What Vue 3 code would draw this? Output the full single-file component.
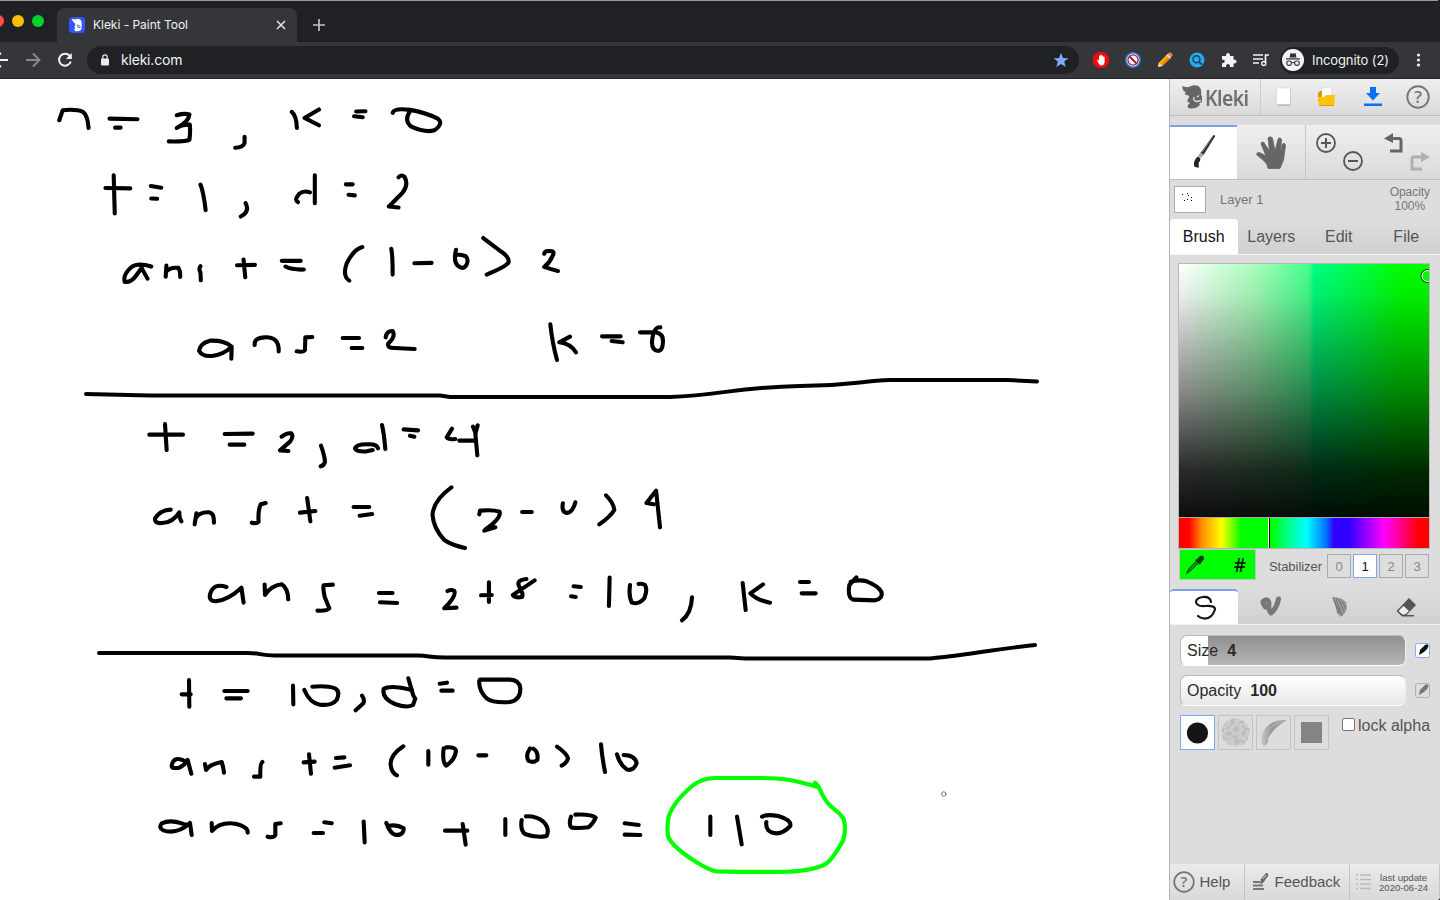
<script setup>
// Pen strokes of the canvas, grouped by area; each area has its own origin and scale.
const inkAreas = [
  {
    x: 40, y: 80, sx: 0.34439, sy: 0.3355,
    d: `M56 120L66 90Q105 86 125 95Q138 105 141 143M202 115L283 117M218 142H234
    M397 105Q420 98 434 103Q432 125 397 143Q410 132 435 133Q437 155 434 178Q425 184 374 183
    M594 169V188Q590 200 567 202M731 95Q744 105 746 143M810 88L768 113L810 135M918 94L945 93M912 108L937 111
    M1024 98Q1028 83 1075 89Q1120 97 1155 115Q1173 130 1145 150Q1120 158 1080 140Q1055 122 1075 92
    M214 284L217 398M190 322L262 323M322 316L352 321M323 353L340 354M466 312Q474 330 481 388M597 367Q610 392 583 407
    M749 364Q737 358 752 340Q765 328 784 335M798 284L798 367M888 311H908M896 342L914 344
    M1041 290Q1050 280 1058 288Q1072 312 1052 337L1013 377L1041 380
    M323 556Q285 543 265 558Q240 580 246 602Q265 604 280 582L295 560L312 592M367 553L365 586M367 570Q380 557 402 560Q408 570 407 587
    M466 555Q460 562 466 575L467 597M591 535L596 588M572 552L624 551M702 539H757M713 556Q730 566 766 565
    M936 498Q910 505 890 548Q878 585 898 598M1020 503Q1024 520 1024 580M1087 546L1137 545
    M1208 506Q1200 540 1212 552Q1228 568 1238 552Q1246 535 1236 525Q1225 520 1210 520
    M1287 471L1340 512Q1365 530 1360 545Q1350 558 1297 580M1464 518Q1466 508 1480 510Q1497 508 1488 525Q1480 545 1464 557Q1480 563 1504 569`
  },
  {
    x: 180, y: 290, sx: 0.33333, sy: 0.33333,
    d: `M153 168Q130 150 90 152Q60 160 57 182Q65 200 95 198Q130 195 155 170L154 206M224 165Q222 143 255 142Q298 140 296 184
    M397 141L376 142L375 180Q370 188 350 184M488 144H537M515 174H547M617 142Q620 122 638 123Q648 140 625 160Q620 175 645 174L704 177
    M1111 103Q1117 160 1131 210M1170 140L1138 157Q1170 160 1188 187M1266 139H1322M1295 153L1328 157
    M1380 127H1425Q1450 130 1449 155Q1448 182 1435 183Q1415 182 1416 155Q1420 110 1441 112
    M-45 402L-40 480M-92 434L9 434M134 432L218 431M149 464H193M305 440Q320 428 334 430Q342 440 330 455L300 481L325 483M423 467Q433 495 435 515Q432 527 422 529
    M594 475Q590 462 565 463Q530 462 525 475Q530 486 560 484L578 480M606 405Q612 430 616 477M671 418L714 421M690 437L703 440
    M816 416L800 442Q806 450 826 447M838 452H887M893 406L886 430L892 496M879 410L887 430`
  },
  {
    x: 130, y: 470, sx: 0.35714, sy: 0.3333,
    d: `M114 119Q85 120 70 145Q68 162 90 159Q120 158 138 127Q138 145 144 154M186 130L181 163M184 145Q195 125 222 127Q236 130 235 158
    M380 99L366 103Q358 120 360 155Q355 162 341 158M496 84L505 154M476 128L519 123M626 111H670M643 137L678 132
    M900 52Q850 90 847 135Q850 175 880 210Q900 225 938 234M978 133L980 122Q1015 118 1035 125Q1040 145 995 178L1023 172L992 182
    M1098 126H1125M1212 100Q1208 125 1222 129Q1238 130 1247 97M1333 76Q1355 100 1356 120Q1345 140 1314 163M1466 103L1446 99L1473 62L1484 172
    M270 351Q235 338 225 370Q218 393 240 394Q275 390 312 353L318 398M377 344L378 375Q395 347 425 343Q442 355 443 388
    M568 344L542 346Q540 355 545 380L558 415Q555 423 525 422M697 369H735M700 397L748 399M889 363Q900 357 908 363Q915 378 880 415L914 413
    M1005 337V396M983 376L1013 375M1133 331Q1100 355 1072 375Q1075 385 1098 381Q1102 370 1090 350Q1080 330 1110 327
    M1242 349L1262 351M1235 379L1248 381M1343 323L1341 408M1400 345Q1396 380 1405 398Q1425 405 1440 385Q1450 360 1442 345Q1435 340 1424 342`
  },
  {
    x: 560, y: 560, sx: 0.33333, sy: 0.33333,
    d: `M396 112Q394 160 366 181M548 69L557 150M609 73L571 100Q590 120 630 128M720 66H747M725 100H767
    M889 52L868 75Q862 115 880 119L945 121Q970 115 964 95Q955 78 920 64Q900 58 872 65M194 790L236 795M194 824L241 825
    M451 770V825M531 770L545 853M606 770Q620 762 655 768Q695 780 691 798Q670 820 650 820Q615 818 619 786`
  },
  {
    x: 150, y: 640, sx: 0.33333, sy: 0.33333,
    d: `M117 120L118 200M95 163H122M223 153H293M229 175H273M429 137L430 193M463 150Q480 190 510 194Q545 198 560 180Q572 155 555 145Q530 136 487 140
    M636 167Q645 180 640 190L617 211M775 115L788 160Q790 170 796 176L789 195Q770 205 735 192Q695 175 701 147Q720 134 786 150
    M869 131L891 128M874 152H908M988 122Q985 150 1010 175Q1030 190 1080 186Q1112 180 1111 145Q1108 120 1080 119H990
    M110 366Q70 343 65 378Q65 387 88 383Q105 375 113 360L124 401M165 372L168 390Q180 372 215 366Q220 380 222 398M337 366Q330 370 331 410H312
    M477 343L483 401M461 367L494 365M558 354L583 352M554 383L600 376M760 319Q720 345 722 375Q725 400 741 406M835 333V374
    M889 322Q915 320 918 332Q915 360 888 377Q876 365 881 325M985 346H1009M1140 325Q1126 345 1135 362Q1150 370 1162 360Q1166 335 1150 326
    M1221 320Q1250 340 1254 355Q1250 370 1235 377M1353 313Q1356 350 1365 396M1401 343Q1410 375 1430 388Q1450 395 1460 370Q1455 345 1421 345
    M120 549Q80 585 40 571Q25 565 35 550Q60 538 95 550Q115 558 120 549L125 585M185 549L186 573Q210 545 255 551Q295 560 293 578
    M392 550L376 552V585Q370 595 353 590M523 547L545 550M491 579H519M641 545L644 607M709 549Q720 580 735 584Q760 588 761 565Q740 552 715 558
    M938 552L947 614M885 572H952M1066 537V585M1115 540Q1110 570 1125 582Q1160 595 1190 588Q1200 565 1180 545Q1160 528 1128 529
    M1263 530Q1255 555 1265 563Q1290 565 1315 562Q1330 550 1337 533Q1325 522 1276 524`
  }
]
const levels = [0, 1, 2, 3]
const tabs = ['Brush', 'Layers', 'Edit', 'File']
</script>

<template>
  <div class="window">
    <div class="tabbar">
      <svg class="lights" width="57" height="41"><circle cx="-2" cy="20" r="6" fill="#ff4f48" /><circle cx="18" cy="20" r="6" fill="#ffbd05" /><circle cx="38" cy="20" r="6" fill="#00d42b" /></svg>
      <div class="tab">
        <svg class="fav" width="16" height="16" viewBox="0 0 16 16"><rect width="16" height="16" rx="4" fill="#3355ff" /><path d="M3 2Q6 2.8 9 1.8Q13 2.5 12.7 7V11.5Q11 12 12 13Q9 15 6 14Q4.5 13 6 11Q4.5 9.5 6.5 8Q6.5 6.5 5 5.5Q3 4.5 3 2" fill="#fff" /><path d="M9 7.5Q8 10.5 10 10.5L11.7 10M10.3 8.3v.8" stroke="#2848d8" fill="none" /></svg>
        <span class="tab-title">Kleki - Paint Tool</span>
        <svg class="close" width="10" height="10" viewBox="0 0 10 10" stroke="#e5e6e8" stroke-width="1.5"><path d="M1 1L9 9M9 1L1 9" /></svg>
      </div>
      <svg class="plus" width="12" height="12" stroke="#bfc1c4" stroke-width="1.7"><path d="M6 0V12M0 6H12" /></svg>
    </div>

    <div class="toolbar">
      <svg width="87" height="36" fill="none" stroke-width="1.8">
        <path d="M-6 18H8M1 11L-6 18L1 25" stroke="#f1f3f4" />
        <path d="M26 18H39M33 11.5L39.5 18L33 24.5" stroke="#8a8b8e" />
        <path d="M70 14.2A6 6 0 1 0 70.8 19.5" stroke="#f1f3f4" stroke-width="2" /><path d="M71.8 11V17H66Z" fill="#f1f3f4" />
      </svg>
      <div class="url">
        <svg width="10" height="12" viewBox="0 0 10 12"><rect x="1" y="4.5" width="8" height="7" rx="1" fill="#e8eaed" /><path d="M2.8 5V3a2.2 2.2 0 0 1 4.4 0V5" fill="none" stroke="#e8eaed" stroke-width="1.2" /></svg>
        <span class="host">kleki.com</span>
        <svg class="star" width="16" height="16" viewBox="0 0 16 16"><path d="M8 .8L10 6L15.5 6.2L11.2 9.6L12.7 15L8 11.9L3.3 15L4.8 9.6L.5 6.2L6 6Z" fill="#7baaf7" /></svg>
      </div>
      <div class="exts">
        <svg width="16" height="16" viewBox="0 0 16 16"><path d="M4.7 0H11.3L16 4.7V11.3L11.3 16H4.7L0 11.3V4.7Z" fill="#f20a0a" /><path d="M4 8Q5 7 6 9V4Q6.5 3 7.2 4V3Q8 2 8.7 3V4Q9.5 3 10.2 4V5Q11 4 11.7 5.2V10Q11 13.5 8.5 13.5Q6 13.5 4 8" fill="#fff" /></svg>
        <svg width="16" height="16" viewBox="0 0 16 16"><circle cx="8" cy="8" r="7.2" fill="#fff" stroke="#2878d0" stroke-width="1.6" /><circle cx="8" cy="8" r="5.1" fill="#f4f4f4" stroke="#a51d32" stroke-width="1.3" /><path d="M4.5 4.5L11.5 11.5" stroke="#a51d32" stroke-width="1.8" /></svg>
        <svg width="16" height="16" viewBox="0 0 16 16"><path d="M1 15L2 10.5L10 2.5L13.5 6L5.5 14Z" fill="#ffad08" /><path d="M3.5 12.5L12 4L13.5 6L5.5 14Z" fill="#f08700" /><path d="M10 2.5L12 .5Q14 0 15.5 2.5Q16 3.5 13.5 6Z" fill="#f47854" /><path d="M9.3 3.2L10.4 2L14 5.6L12.8 6.7Z" fill="#d9dde0" /><path d="M1 15L2 10.5L5.5 14Z" fill="#f4dfb8" /></svg>
        <svg width="16" height="16" viewBox="0 0 16 16"><circle cx="8" cy="8" r="7.5" fill="#29a9ea" /><circle cx="7.5" cy="7.2" r="3.5" fill="none" stroke="#174461" stroke-width="1.5" /><path d="M10 10L13 12.5" stroke="#174461" stroke-width="1.8" /></svg>
        <svg width="16" height="16" viewBox="0 0 16 16"><path d="M1 4H5Q5 1 7 1Q9 1 9 4H12.5V7.5Q15.5 7.5 15.5 9.5Q15.5 11.5 12.5 11.5V15H9Q9 12 7 12Q5 12 5 15H1V11.2Q3.8 11.2 3.8 9.3Q3.8 7.4 1 7.4Z" fill="#f1f3f4" /></svg>
        <svg width="18" height="16" viewBox="0 0 18 16"><path d="M1 3H11M1 7H11M1 11H7" stroke="#f1f3f4" stroke-width="1.6" /><path d="M13.5 11V3H17" stroke="#f1f3f4" stroke-width="1.7" fill="none" /><circle cx="11.8" cy="11.5" r="2" fill="none" stroke="#f1f3f4" stroke-width="1.4" /></svg>
      </div>
      <div class="incog">
        <svg width="22" height="22" viewBox="0 0 22 22"><circle cx="11" cy="11" r="11" fill="#f1f3f4" /><path d="M7.5 8.5L8.5 4Q11 5 13.5 4L14.5 8.5ZM4 9.2H18V10.4H4Z" fill="#303134" /><path d="M9.5 14Q11 13 12.5 14" stroke="#303134" fill="none" /><g fill="none" stroke="#303134" stroke-width="1.2"><rect x="4.8" y="12" width="4.6" height="4.3" rx="1.8" /><rect x="12.6" y="12" width="4.6" height="4.3" rx="1.8" /></g></svg>
        <span>Incognito (2)</span>
      </div>
      <svg class="dots" width="38" height="36" fill="#f1f3f4"><circle cx="19.5" cy="13" r="1.6" /><circle cx="19.5" cy="18" r="1.6" /><circle cx="19.5" cy="23" r="1.6" /></svg>
    </div>

    <div class="workspace">
      <svg class="canvas" width="1169" height="821" viewBox="0 79 1169 821" fill="none" stroke="#000" stroke-linecap="round" stroke-linejoin="round">
        <g v-for="a in inkAreas" :key="a.x" :transform="`translate(${a.x} ${a.y}) scale(${a.sx} ${a.sy})`" stroke-width="4.1"><path vector-effect="non-scaling-stroke" :d="a.d" /></g>
        <g stroke-width="4"><path d="M86 394L150 395.5H440L450 397H670C720 395 740 387 800 386C850 386 860 381 890 380H1008L1037 381.5" /><path d="M99 653H248C260 653 260 655.5 275 655.5H418C430 656 430 657.5 445 657.5H730L745 658.5H930C960 656 990 650 1035 645" /></g>
        <path transform="translate(560 560) scale(.33333)" stroke="#0f0" stroke-width="12.5" d="M772 681Q740 671 690 660Q650 654 600 654L465 654Q430 654 400 675Q340 725 326 770Q320 800 324 828Q335 860 410 907Q450 932 470 934Q580 937 690 935Q770 930 800 910Q820 895 850 840Q860 800 850 775Q840 760 820 745Q800 730 785 700Q775 675 765 668L772 681" />
        <circle cx="943.8" cy="794" r="2.2" stroke="#555" stroke-width=".8" />
      </svg>

      <aside class="panel">
        <header class="head bevel">
          <div class="brand">
            <svg width="22" height="25" viewBox="0 0 22 25"><path d="M.5 1Q4 3 8 1.5Q13-1 17 1.5Q20 4 19 10L20 11V17Q16 18 18 20Q14 24 8 23.5Q3 22 8 18Q4 17 6 14Q9 11 5 10Q1 9 4 7.5Q0 6 .5 1" fill="#666" /><path d="M12 12Q11 16.5 15 16.5L19 15.5M15 12L17 10.5" stroke="#ddd" stroke-width="1.4" fill="none" /></svg>
            <span class="wordmark">Kleki</span>
          </div>
          <div class="file-buttons">
            <svg width="45" height="36"><path d="M16 10H30V26.5H16Z" fill="#999" /><path d="M15.5 9H29.5V25.5H15.5Z" fill="#fff" stroke="#ccc" stroke-width=".5" /></svg>
            <svg width="45" height="36"><path d="M12 14L14 12H20V22H12Z" fill="#d89500" /><path d="M16 9L25 8L27 20H16Z" fill="#fff" stroke="#ccc" stroke-width=".5" /><path d="M12 18H18L20 16H29L28 27H13Z" fill="#ffc30a" /><path d="M13 26.5H28" stroke="#daa000" /></svg>
            <svg width="45" height="36"><path d="M19 8H25V14H29L22 21.5L15 14H19ZM13 24.5H31V27H13Z" fill="#0871f5" /></svg>
            <svg width="44" height="36"><circle cx="22" cy="18" r="10.7" fill="none" stroke="#777" stroke-width="1.9" /><text x="22" y="23.5" text-anchor="middle" class="question">?</text></svg>
          </div>
        </header>
        <div class="tools bevel">
          <div class="tool active"><svg width="67" height="50"><path d="M43 8.5Q45.5 7 45 9.5L33.5 28L30.5 26Z" fill="#303030" /><path d="M42.5 9.5L32.5 25" stroke="#999" stroke-width=".8" /><path d="M30.5 25L33.5 28L31 31L28 29Z" fill="#aaa" /><path d="M28 29.5Q32.5 31.5 28.5 36L29 40.5Q23 41 24 36Q25 31 28 29.5" fill="#222" /></svg></div>
          <div class="tool"><svg width="67" height="54"><path d="M31 43.5Q30.5 38.5 27 36L19.5 29.5Q20 26.5 23.5 28L29 31L24 19Q24 16.5 26.5 17L32.5 26L31 13Q33.5 10.5 35.5 13L38 26L41 14Q43.5 11.5 44.5 14.5L43.5 28L45.5 19Q48 17 48.5 20.5L46.5 35L43 43.5Z" fill="#666" stroke="#666" stroke-width=".8" /></svg></div>
          <div class="views"><svg width="134" height="54" fill="none">
            <g stroke="#555" stroke-width="1.8"><circle cx="20" cy="18" r="9" /><path d="M15 18H25M20 13V23" stroke-width="2" /><circle cx="47" cy="36" r="9" /><path d="M42 36H52" stroke-width="2" /></g>
            <path d="M85 13.5H93Q95 13.5 95 16V26H84" stroke="#666" stroke-width="3" /><path d="M87 8V18L78 13.5Z" fill="#666" />
            <path d="M118 32H108Q106 32 106 34V44H116" stroke="#b0b0b0" stroke-width="3" /><path d="M115 27V37L124 32Z" fill="#b0b0b0" />
          </svg></div>
        </div>
        <div class="layer">
          <svg width="32" height="27"><rect x=".5" y=".5" width="31" height="26" fill="#fff" stroke="#aaa" /><path d="M8 8.5h1M13 7.5h1M14 9.5h1M17 11.5h1M10 14.5h1M13 13.5h1M17 14.5h1" stroke="#000" /></svg>
          <span class="layer-name">Layer 1</span>
          <span class="layer-opacity">Opacity<br />100%</span>
        </div>
        <nav class="tabs"><div v-for="t in tabs" :key="t" :class="{ active: t === 'Brush' }">{{ t }}</div></nav>
        <div class="picker">
          <div class="shade"><svg width="250" height="252"><circle cx="248.5" cy="12" r="6.5" fill="none" stroke="#111" /><circle cx="248.5" cy="12" r="5.5" fill="none" stroke="#fff" /></svg></div>
          <div class="hue"><i></i></div>
        </div>
        <div class="color-row">
          <div class="swatch">
            <svg width="19" height="20" viewBox="0 0 19 20"><path d="M12 8L4 16L1 18L3 14L11 6" fill="none" stroke="#115c11" stroke-width="1.5" /><path d="M9 5L11 4L14 1Q18-1 18 4L15 8L14 10Z" fill="#123912" /></svg>
            <b>#</b>
          </div>
          <span class="stab">Stabilizer</span>
          <div class="levels"><span v-for="n in levels" :key="n" :class="{ active: n === 1 }">{{ n }}</span></div>
        </div>
        <div class="brushes">
          <div class="active"><svg width="26" height="26" viewBox="0 0 26 26"><path d="M20 7Q19 1.5 12 2Q5 3 5 7Q5.5 11.5 14 11Q24 10 24 14.5Q21 24 13 23.5Q9 23 7 21" fill="none" stroke="#151515" stroke-width="2.2" stroke-linecap="round" /></svg></div>
          <div><svg class="soft" width="24" height="26" viewBox="0 0 24 26"><path d="M6.5 13Q3 9 4.5 7Q9 4 10 9Q9 16 12 19Q18 14 19.5 5" fill="none" stroke="#777" stroke-width="5" stroke-linecap="round" stroke-linejoin="round" /></svg></div>
          <div><svg width="24" height="26" viewBox="0 0 24 26"><path d="M5 3Q14 3 19 8Q21 14 18 19L14 23L10 19L8 10Z" fill="#999" /><path d="M6 4L14 20M9 4L15 22M12 5L17 18M15 7L19 15M7 7L12 20" stroke="#707070" stroke-width=".9" /></svg></div>
          <div><svg width="24" height="26" viewBox="0 0 24 26"><path d="M4 17L9 21H20V22.5H8L2.5 17Z" fill="#555" /><path d="M2.5 17L15 4L22 11L12 21.5H8Z" fill="#555" /><path d="M4.5 17L9.5 12L15 17L11 20.5H8.5Z" fill="#eee" /></svg></div>
        </div>
        <section class="settings">
          <div class="slider-row">
            <div class="slider size"><span>Size</span><b>4</b></div>
            <svg class="pressure" width="15" height="15"><rect x=".5" y=".5" width="14" height="14" rx="2" fill="#fff" stroke="#8caaf5" /><path d="M4 12L5 7L10 2Q13 0 13.5 3Q13 6 9 9Z" fill="#111" /></svg>
          </div>
          <div class="slider-row">
            <div class="slider"><span>Opacity</span><b>100</b></div>
            <svg class="pressure" width="15" height="15"><rect x=".5" y=".5" width="14" height="14" rx="2" fill="#ddd" stroke="#b2b2b2" /><path d="M4 12L5 7L10 2Q13 0 13.5 3Q13 6 9 9Z" fill="#777" /></svg>
          </div>
          <div class="tips">
            <div class="tip active"><svg width="33" height="33"><circle cx="16.5" cy="17" r="10.6" fill="#151515" /></svg></div>
            <div class="tip"><svg width="33" height="33"><defs><filter id="grain" x="0" y="0" width="1" height="1"><feTurbulence type="fractalNoise" baseFrequency=".25" numOctaves="3" seed="4" /><feColorMatrix values="0 0 0 0 .5 0 0 0 0 .5 0 0 0 0 .5 5 0 0 0 -2.2" /><feComposite in2="SourceGraphic" operator="in" /></filter></defs><circle cx="16.5" cy="16.5" r="14" fill="#cdcdcd" /><circle cx="16.5" cy="16.5" r="14" filter="url(#grain)" /></svg></div>
            <div class="tip"><svg width="33" height="33"><defs><linearGradient id="stroke"><stop stop-color="#c8c8c8" /><stop offset=".4" stop-color="#999" /><stop offset="1" stop-color="#aaa" /></linearGradient></defs><path d="M30 4Q13 3 6 16Q2 26 7 30Q12 28 11 23Q16 12 30 4" fill="url(#stroke)" /><path d="M25 5Q12 9 7 20" stroke="#bbb" fill="none" /></svg></div>
            <div class="tip"><svg width="33" height="33"><rect x="6" y="6" width="21" height="21" fill="#848484" /></svg></div>
            <div class="lock"><i></i><span>lock alpha</span></div>
          </div>
        </section>
        <footer class="foot">
          <div class="help"><svg width="22" height="22"><circle cx="11" cy="11" r="9.8" fill="none" stroke="#777" stroke-width="1.8" /><text x="11" y="16" text-anchor="middle" class="question small">?</text></svg><span>Help</span></div>
          <div class="feedback"><svg width="18" height="20"><path d="M1 10H8M1 13.5H11M1 17H12" stroke="#777" stroke-width="1.8" /><path d="M8 12L9 7L14 1Q17 1 16 4L11 11Z" fill="#666" /><path d="M11 7L14 3" stroke="#ddd" /></svg><span>Feedback</span></div>
          <div class="update"><svg width="15" height="16" stroke="#bbb" stroke-width="1.5"><path d="M0 1H2M4 1H15M0 5.5H2M4 5.5H15M0 10H2M4 10H15M0 14.5H2M4 14.5H15" /></svg><span>last update<br />2020-06-24</span></div>
        </footer>
      </aside>
    </div>
  </div>
</template>

<style>
body { margin: 0; overflow: hidden; background: #0d1824; }
</style>
<style scoped>
* { box-sizing: border-box; }
svg { display: block; flex: none; }
.window { width: 1440px; height: 900px; display: flex; flex-direction: column; overflow: hidden; border-radius: 0 4px 4px 0; font-family: "Liberation Sans", Arial, sans-serif; }
.tabbar { height: 42px; flex: none; display: flex; background: #202124; border-top: 1px solid #969a9d; }
.tab { width: 240px; margin-top: 7px; height: 34px; background: #35363a; border-radius: 8px 8px 0 0; display: flex; align-items: center; padding-left: 12px; color: #f1f3f4; }
.tab-title { font: 12px Inter, sans-serif; margin: -2px 0 0 8px; width: 183px; white-space: nowrap; letter-spacing: -.03px; }
.plus { margin: 18px 0 0 16px; }
.toolbar { height: 37px; flex: none; background: #35363a; border-bottom: 1px solid #242528; display: flex; align-items: center; }
.url { width: 992px; height: 28px; border-radius: 14px; background: #202124; display: flex; align-items: center; padding: 0 10px 0 13px; }
.host { font: 14px Inter, sans-serif; color: #f1f3f4; margin: -2px 0 0 11px; letter-spacing: -.2px; }
.star { margin-left: auto; }
.exts { width: 195px; margin-left: 6px; padding-right: 3px; display: grid; grid-template-columns: repeat(6, 32px); justify-items: center; }
.incog { width: 119px; height: 27px; border-radius: 14px; background: #202124; display: flex; align-items: center; padding-left: 2px; color: #f1f3f4; font: 13px Inter, sans-serif; }
.incog span { margin-left: 8px; white-space: nowrap; letter-spacing: -.1px; }
.dots { width: 38px; }
.workspace { flex: 1; display: flex; background: #fff; min-height: 0; }
.panel { width: 271px; border-left: 1px solid #b5b5b5; background: #ddd; display: flex; flex-direction: column; color: #555; }
.bevel { background: linear-gradient(#efefef, #dadada); border-bottom: 1px solid #bdbdbd; }
.head { height: 37px; display: flex; flex: none; }
.brand { width: 91px; border-right: 1px solid #ccc; display: flex; align-items: center; padding-left: 12px; }
.wordmark { font: 600 22px "Noto Sans", sans-serif; letter-spacing: -.6px; color: #707070; margin-left: 1px; transform: scaleX(.88); transform-origin: left; }
.file-buttons { display: flex; }
.question { font: 600 17px "Open Sans", sans-serif; fill: #777; }
.small { font-size: 15px; }
.tools { height: 55px; margin-top: 9px; flex: none; display: flex; }
.tool { width: 67px; height: 54px; }
.tool.active { background: #fff; border-top: 2px solid #7ca2ec; }
.views { width: 136px; border-left: 1px solid #c7c7c7; margin-left: 1px; }
.layer { height: 39px; flex: none; display: flex; align-items: center; padding: 0 10px 1px 4px; }
.layer-name { font-size: 13px; color: #757575; margin-left: 14px; padding-top: 1px; }
.layer-opacity { margin-left: auto; text-align: center; font-size: 12px; line-height: 14px; color: #757575; letter-spacing: -.05px; }
.tabs { height: 36px; flex: none; display: flex; background: linear-gradient(#ddd, #d0d0d0); border-bottom: 1px solid #f6f6f6; font-size: 16px; }
.tabs div { width: 67.5px; text-align: center; line-height: 35px; }
.tabs .active { background: #fff; color: #111; border-radius: 4px 4px 0 0; }
.picker { width: 252px; margin: 8px 0 0 8px; border: 1px solid #b8b8b8; flex: none; }
.shade { height: 254px; border-bottom: 1px solid #aaa; background: linear-gradient(rgba(0,0,0,0) 0%, rgba(0,0,0,.07) 12%, rgba(0,0,0,.46) 50%, rgba(0,0,0,.84) 82%, rgba(0,0,0,.95) 100%), linear-gradient(90deg, #fff, #a9ffbc 30%, #45ff8c 52%, #00ff80 54%, #00ff3c 74%, #0f0 89%); }
.hue { height: 30px; background: linear-gradient(90deg, red 0 4%, #ff8a00 9%, #ff0 17%, #0f0 25% 37%, #00ff80 43%, #0ff 51%, #0070ff 59%, #3000ff 62% 68%, #f0f 82%, #f0a 87%, #f00 96%); }
.hue i { display: block; width: 2px; height: 30px; margin-left: 89px; background: linear-gradient(90deg, #fff 50%, #000 50%); }
.color-row { height: 32px; flex: none; display: flex; padding-left: 9px; }
.swatch { width: 77px; height: 31px; background: #0f0; border: 1px solid #b7cbb7; display: flex; align-items: center; justify-content: space-between; padding: 0 9px 0 6px; }
.swatch b { color: #121; font: 600 19px "Open Sans", sans-serif; }
.stab { width: 58px; font-size: 13px; margin: 10px 0 0 13px; letter-spacing: -.05px; }
.levels { display: flex; gap: 2px; padding-top: 5px; }
.levels span { width: 24px; height: 24px; border: 1px solid #aaa; color: #888; font-size: 13px; text-align: center; line-height: 23px; }
.levels .active { background: #fff; border-color: #83a3ef; color: #111; }
.brushes { height: 36px; margin-top: 8px; flex: none; display: flex; background: linear-gradient(#ddd, #d0d0d0); border-bottom: 1px solid #f1f1f1; }
.brushes div { width: 67.5px; display: flex; align-items: center; justify-content: center; }
.brushes .active { background: #fff; border-top: 2px solid #80a2ee; border-radius: 4px 4px 0 0; }
.soft { filter: blur(.7px); }
.settings { padding: 10px 0 0 10px; }
.slider-row { display: flex; height: 40px; align-items: flex-start; }
.slider { width: 226px; height: 31px; border-radius: 7px; border: 1px solid #bbb; border-bottom-color: #fff; border-right-color: #eee; background: linear-gradient(#fff, #e7e7e7); padding: 0 6px; line-height: 29px; font-size: 16px; color: #292929; }
.slider b { margin-left: 9px; }
.size { background: linear-gradient(90deg, #fff 0 27px, transparent 27px), linear-gradient(#909090, #b6b6b6); }
.pressure { margin: 8px 0 0 9px; }
.tips { display: flex; gap: 3px; }
.tip { width: 35px; height: 35px; border: 1px solid #c4c4c4; }
.tip.active { border-color: #80a6ed; background: #fff; }
.lock { margin-left: 10px; display: flex; font-size: 16px; line-height: 21px; white-space: nowrap; }
.lock i { width: 13px; height: 13px; background: #fff; border: 1px solid #777; border-radius: 2px; margin: 3px 3px 0 0; }
.foot { height: 36px; margin-top: auto; display: flex; background: linear-gradient(#ebebeb, #d9d9d9); font-size: 15px; }
.foot > div { display: flex; align-items: center; border-right: 1px solid #c4c4c4; }
.foot > div > span { margin-top: -1px; }
.help { width: 75px; padding-left: 3px; gap: 4.5px; }
.feedback { width: 105px; padding-left: 7px; gap: 4.5px; }
.update { flex: 1; padding-left: 6px; gap: 8px; font-size: 9.6px; line-height: 10px; text-align: center; }
.update > span { padding-top: 2px; }
</style>
